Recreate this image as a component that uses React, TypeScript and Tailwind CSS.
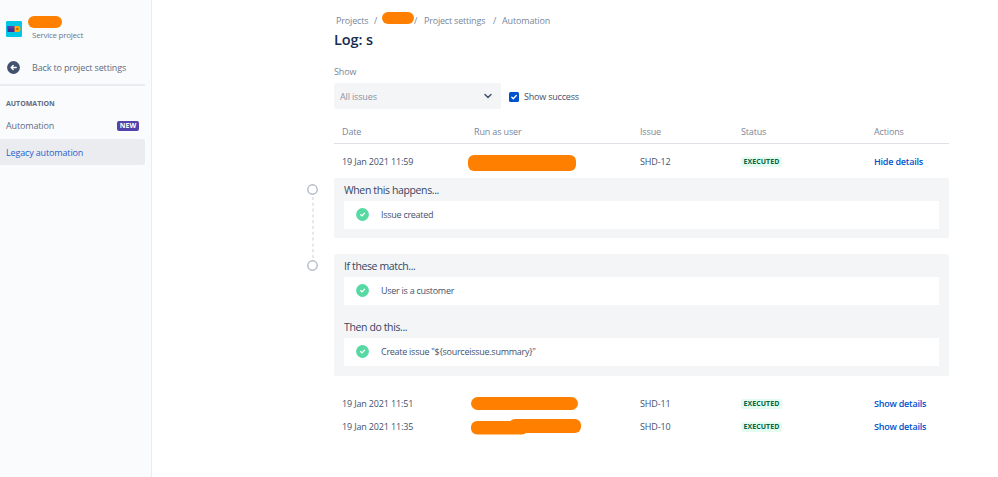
import React from "react";

const rows = [
  { date: "19 Jan 2021 11:51", issue: "SHD-11" },
  { date: "19 Jan 2021 11:35", issue: "SHD-10" },
];

const grid = "grid grid-cols-[132px_166px_101px_133px_1fr] items-center pl-2";

const CheckCircle = () => (
  <svg className="ml-3 h-[13px] w-[13px] shrink-0" viewBox="0 0 13 13">
    <circle cx="6.5" cy="6.5" r="6.4" fill="#57d9a3" />
    <path
      d="M4.6 6.6l1.4 1.3 2.5-2.6"
      fill="none"
      stroke="#fff"
      strokeWidth="1.3"
      strokeLinecap="round"
      strokeLinejoin="round"
    />
  </svg>
);

const Card = ({ text }: { text: string }) => (
  <div className="flex h-[28px] items-center bg-white pb-[2px]">
    <CheckCircle />
    <span className="ml-3 pt-[2px] text-[9px] tracking-[-0.27px] text-[#42526e]">{text}</span>
  </div>
);

const Heading = ({ text }: { text: string }) => (
  <h2 className="h-[22px] text-[10.5px] leading-[23px] tracking-[-0.38px] text-[#344563]">
    {text}
  </h2>
);

const Executed = () => (
  <div className="flex pt-px">
    <span className="h-[10px] w-[41px] rounded-[2px] bg-[#e3fcef] text-center text-[7px] leading-[10px] font-bold tracking-[0.05px] text-[#006644]">
      EXECUTED
    </span>
  </div>
);

const Node = () => (
  <svg className="h-[11px] w-[11px] shrink-0" viewBox="0 0 11 11">
    <circle cx="5.5" cy="5.5" r="4.7" fill="#fff" stroke="#b3bac5" strokeWidth="1.4" />
  </svg>
);

const Sidebar = () => (
  <aside className="h-full w-[152px] shrink-0 border-r border-[#ebecf0] bg-[#fafbfc] text-[#5e6c84]">
    <div className="flex h-[42px] pt-4 pl-[6px]">
      <svg className="mt-[5px] h-4 w-4" viewBox="0 0 16 16">
        <rect width="16" height="16" rx="1.2" fill="#00c7e6" />
        <rect x="1.5" y="5" width="9" height="6" rx="0.5" fill="#403294" />
        <rect x="1.5" y="5" width="7" height="2.4" fill="#5243aa" />
        <path d="M8.5 5H12a2.5 3 0 0 1 0 6H8.5z" fill="#ffab00" />
        <circle cx="11.3" cy="8" r="1.1" fill="#bf4b18" />
      </svg>
      <div className="ml-[6px]">
        <div className="h-3 w-[34px] rounded-full bg-[#ff8000]" />
        <p className="ml-1 text-[8px] leading-[14px] tracking-[-0.25px] text-[#6b778c]">Service project</p>
      </div>
    </div>
    <div className="mt-[15px] flex h-[21px] items-center pl-[7px]">
      <svg className="h-[13px] w-[13px]" viewBox="0 0 13 13">
        <circle cx="6.5" cy="6.5" r="6.4" fill="#42526e" />
        <path
          d="M9.2 6.5H4.4M6.2 4.6L4.2 6.5l2 1.9"
          fill="none"
          stroke="#fff"
          strokeWidth="1.4"
          strokeLinecap="round"
          strokeLinejoin="round"
        />
      </svg>
      <span className="ml-3 text-[9px]">Back to project settings</span>
    </div>
    <div className="mt-[6px] h-[2px] w-[145px] bg-[#ebecf0]" />
    <h3 className="mt-[10px] pl-[6px] text-[7px] leading-4 font-bold tracking-normal">AUTOMATION</h3>
    <div className="mt-[2px] flex h-6 w-[139px] items-center justify-between pl-[6px]">
      <span className="text-[9px]">Automation</span>
      <span className="h-[10px] w-[22px] rounded-[2px] bg-[#5243aa] text-center text-[7px] leading-[10px] font-bold tracking-normal text-white">
        NEW
      </span>
    </div>
    <div className="mt-px flex h-[26px] w-[145px] items-center rounded-r-[2px] bg-[#ebecf0] pt-px pl-[6px] text-[9px] text-[#1f63cf]">
      Legacy automation
    </div>
  </aside>
);

export default function App() {
  return (
    <div className="flex h-[477px] w-[998px] overflow-hidden bg-white font-['Open_Sans','Noto_Sans',sans-serif] text-[9px] tracking-[-0.15px] whitespace-nowrap text-[#42526e]">
      <Sidebar />
      <main className="ml-[182px] w-[615px] pt-3">
        <nav className="flex h-[17px] items-center pl-[2px] text-[#7a869a]">
          <span className="w-[38px]">Projects</span>
          <span className="w-[8px]">/</span>
          <span className="mb-[5px] h-3 w-8 rounded-full bg-[#ff8000]" />
          <span className="w-[10px]">/</span>
          <span className="w-[66px] tracking-[-0.2px]">Project settings</span>
          <span className="w-[9px] text-center">/</span>
          <span className="ml-[3px]">Automation</span>
        </nav>
        <h1 className="h-[35px] text-[14.5px] leading-[22px] font-semibold tracking-[-0.1px] text-[#172b4d]">
          Log: s
        </h1>
        <p className="h-[19px] leading-4 text-[#7a869a]">Show</p>
        <div className="flex h-[26px] items-center">
          <div className="flex h-[26px] w-[167px] items-center justify-between rounded-[2px] bg-[#f4f5f7] pr-2 pl-[6px] text-[#8993a4]">
            <span className="pt-px">All issues</span>
            <svg className="h-[10px] w-[10px]" viewBox="0 0 10 10">
              <path
                d="M2 3.5l3 3 3-3"
                fill="none"
                stroke="#42526e"
                strokeWidth="1.5"
                strokeLinecap="round"
                strokeLinejoin="round"
              />
            </svg>
          </div>
          <svg className="mt-[2px] ml-2 h-[10px] w-[10px]" viewBox="0 0 10 10">
            <rect width="10" height="10" rx="1.5" fill="#0052cc" />
            <path
              d="M2.8 5.2l1.5 1.5 3-3.2"
              fill="none"
              stroke="#fff"
              strokeWidth="1.3"
              strokeLinecap="round"
              strokeLinejoin="round"
            />
          </svg>
          <span className="ml-[5px] pt-[2px] tracking-[-0.2px]">Show success</span>
        </div>

        <div className={`${grid} mt-[11px] h-6 border-b border-[#dfe1e6] text-[#7a869a]`}>
          <span>Date</span>
          <span>Run as user</span>
          <span>Issue</span>
          <span>Status</span>
          <span>Actions</span>
        </div>
        <div className={`${grid} h-[34px] pt-px`}>
          <span>19 Jan 2021 11:59</span>
          <span className="mt-[2px] ml-[-6px] h-4 w-[108px] rounded-[6px] bg-[#ff8000]" />
          <span>SHD-12</span>
          <Executed />
          <span className="font-semibold tracking-[-0.2px] text-[#0052cc]">Hide details</span>
        </div>

        <div className="ml-[-27px] flex">
          <div className="flex w-[27px] flex-col pt-[6px]">
            <Node />
            <svg className="my-[2px] ml-[5px] h-[61px] w-[2px]" viewBox="0 0 2 61">
              <path d="M1 0V61" stroke="#dfe1e6" strokeWidth="1.6" strokeDasharray="3 2.8" />
            </svg>
            <Node />
          </div>
          <div className="w-[615px]">
            <section className="h-[60px] rounded-[2px] bg-[#f4f5f7] px-[10px] pt-px">
              <Heading text="When this happens..." />
              <Card text="Issue created" />
            </section>
            <section className="mt-4 h-[122px] rounded-[2px] bg-[#f4f5f7] px-[10px] pt-px">
              <Heading text="If these match..." />
              <Card text="User is a customer" />
              <div className="h-[11px]" />
              <Heading text="Then do this..." />
              <Card text={'Create issue "${sourceissue.summary}"'} />
            </section>
          </div>
        </div>

        <div className="mt-4">
          {rows.map((row, i) => (
            <div key={row.issue} className={`${grid} h-[23px]`}>
              <span>{row.date}</span>
              {i === 0 ? (
                <span className="ml-[-3px] h-[13px] w-[107px] rounded-full bg-[#ff8000]" />
              ) : (
                <svg className="ml-[-3px] h-[16px] w-[111px]" viewBox="0 0 111 16">
                  <rect y="2" width="57" height="13.5" rx="6" fill="#ff8000" />
                  <rect x="38" width="72" height="14" rx="6" fill="#ff8000" />
                </svg>
              )}
              <span>{row.issue}</span>
              <Executed />
              <span className="font-semibold tracking-[-0.22px] text-[#0052cc]">Show details</span>
            </div>
          ))}
        </div>
      </main>
    </div>
  );
}
